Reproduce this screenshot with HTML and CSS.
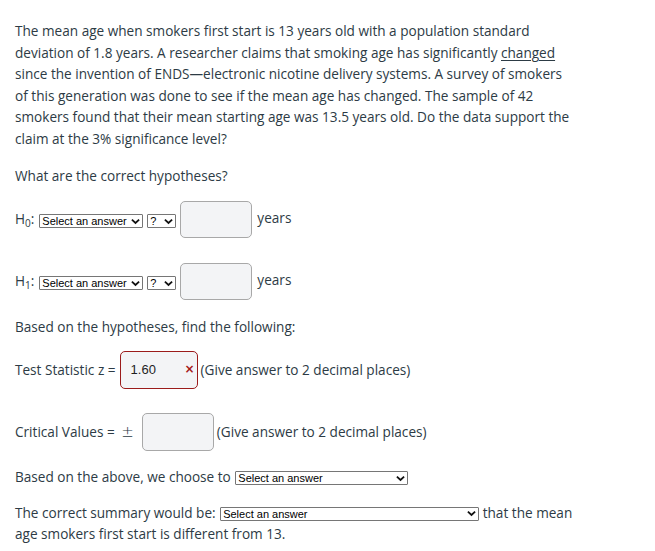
FILE: index.html
```html
<!DOCTYPE html>
<html>
<head>
<meta charset="utf-8">
<link rel="stylesheet" href="styles.css">
</head>
<body>
<div class="page">
  <p class="intro">The mean age when smokers first start is 13 years old with a population standard<br>deviation of 1.8 years. A researcher claims that smoking age has significantly <u>changed</u><br>since the invention of ENDS—electronic nicotine delivery systems. A survey of smokers<br>of this generation was done to see if the mean age has changed. The sample of 42<br>smokers found that their mean starting age was 13.5 years old. Do the data support the<br>claim at the 3% significance level?</p>
  <p class="q">What are the correct hypotheses?</p>

  <div class="row hyp h0">
    <span class="lbl">H<sub>0</sub>:</span>
    <span class="sel sel-ans">Select an answer<svg class="chev" viewBox="0 0 10 7"><path d="M1 1.5 L5 5.2 L9 1.5" /></svg></span>
    <span class="sel sel-q">?<svg class="chev" viewBox="0 0 10 7"><path d="M1 1.5 L5 5.2 L9 1.5" /></svg></span>
    <span class="box"></span>
    <span class="unit">years</span>
  </div>

  <div class="row hyp h1">
    <span class="lbl">H<sub>1</sub>:</span>
    <span class="sel sel-ans">Select an answer<svg class="chev" viewBox="0 0 10 7"><path d="M1 1.5 L5 5.2 L9 1.5" /></svg></span>
    <span class="sel sel-q">?<svg class="chev" viewBox="0 0 10 7"><path d="M1 1.5 L5 5.2 L9 1.5" /></svg></span>
    <span class="box"></span>
    <span class="unit">years</span>
  </div>

  <p class="q2">Based on the hypotheses, find the following:</p>

  <div class="row ts">
    <span class="lbl">Test Statistic z =</span>
    <span class="box box-wrong"><span class="val">1.60</span><span class="x">×</span></span>
    <span class="hint">(Give answer to 2 decimal places)</span>
  </div>

  <div class="row cv">
    <span class="lbl">Critical Values&nbsp;=&nbsp;<span class="pm">±</span></span>
    <span class="box box-cv"></span>
    <span class="hint">(Give answer to 2 decimal places)</span>
  </div>

  <p class="choose">Based on the above, we choose to <span class="sel sel-wide">Select an answer<svg class="chev" viewBox="0 0 10 7"><path d="M1 1.5 L5 5.2 L9 1.5" /></svg></span></p>

  <p class="summary">The correct summary would be: <span class="sel sel-sum">Select an answer<svg class="chev" viewBox="0 0 10 7"><path d="M1 1.5 L5 5.2 L9 1.5" /></svg></span> that the mean<br>age smokers first start is different from 13.</p>
</div>
</body>
</html>
```

FILE: styles.css
```css
html, body {
  margin: 0;
  padding: 0;
  background: #ffffff;
}
.page {
  padding: 20px 15px 0 15px;
  font-family: "Open Sans", "Noto Sans", sans-serif;
  font-size: 13.6px;
  line-height: 21.5px;
  color: #2d3b45;
  width: 620px;
  white-space: nowrap;
}
p {
  margin: 0;
}
.intro u {
  text-decoration-thickness: 1px;
  text-underline-offset: 2px;
}
.q {
  margin-top: 16px;
}
.row {
  display: flex;
  align-items: center;
}
.hyp.h0 {
  margin-top: 14px;
}
.hyp.h1 {
  margin-top: 25px;
}
.lbl sub {
  font-size: 10px;
  line-height: 0;
  vertical-align: -3px;
}
.hyp .lbl {
  margin-right: 5px;
}
.sel {
  display: inline-flex;
  align-items: center;
  justify-content: space-between;
  box-sizing: border-box;
  height: 14px;
  border: 1px solid #767676;
  border-radius: 1px;
  font-family: "Liberation Sans", Arial, sans-serif;
  font-size: 11px;
  line-height: 12px;
  color: #000;
  padding: 0 2px 0 2px;
  background: #fff;
  vertical-align: middle;
}
.hyp .sel {
  position: relative;
  top: 2px;
}
.chev {
  width: 9px;
  height: 7px;
  margin-left: 3px;
  fill: none;
  stroke: #111;
  stroke-width: 2;
}
.sel-ans {
  width: 104px;
}
.sel-q {
  width: 29px;
  margin-left: 4px;
}
.box {
  box-sizing: border-box;
  display: inline-flex;
  align-items: center;
  width: 72px;
  height: 37px;
  border: 1px solid #a8a8a8;
  border-radius: 5px;
  background: #f3f4f6;
  margin-left: 4px;
}
.unit {
  margin-left: 5px;
  position: relative;
  top: -1px;
}
.q2 {
  margin-top: 16px;
}
.ts {
  margin-top: 14px;
}
.ts .lbl {
  margin-right: 4px;
}
.box-wrong {
  width: 78px;
  height: 38px;
  border-color: #9b1b1b;
  margin-left: 0;
  justify-content: space-between;
  padding: 0 2px 0 10px;
  font-family: "Liberation Sans", Arial, sans-serif;
  font-size: 13px;
  color: #1f1f1f;
}
.x {
  color: #a51616;
  font-family: "DejaVu Sans", sans-serif;
  font-size: 12px;
  font-weight: bold;
}
.ts .hint {
  margin-left: 3px;
}
.cv {
  margin-top: 24px;
}
.pm {
  font-family: "DejaVu Sans", sans-serif;
  font-size: 15px;
  font-weight: 300;
  line-height: 0;
  margin-left: 3px;
}
.box-cv {
  margin-left: 8px;
  height: 38px;
}
.cv .hint {
  margin-left: 3px;
}
.choose {
  margin-top: 15px;
}
.sel-wide {
  width: 173px;
  margin-left: 1px;
}
.summary {
  margin-top: 14px;
}
.sel-sum {
  width: 259px;
  margin-left: 1px;
}
```
